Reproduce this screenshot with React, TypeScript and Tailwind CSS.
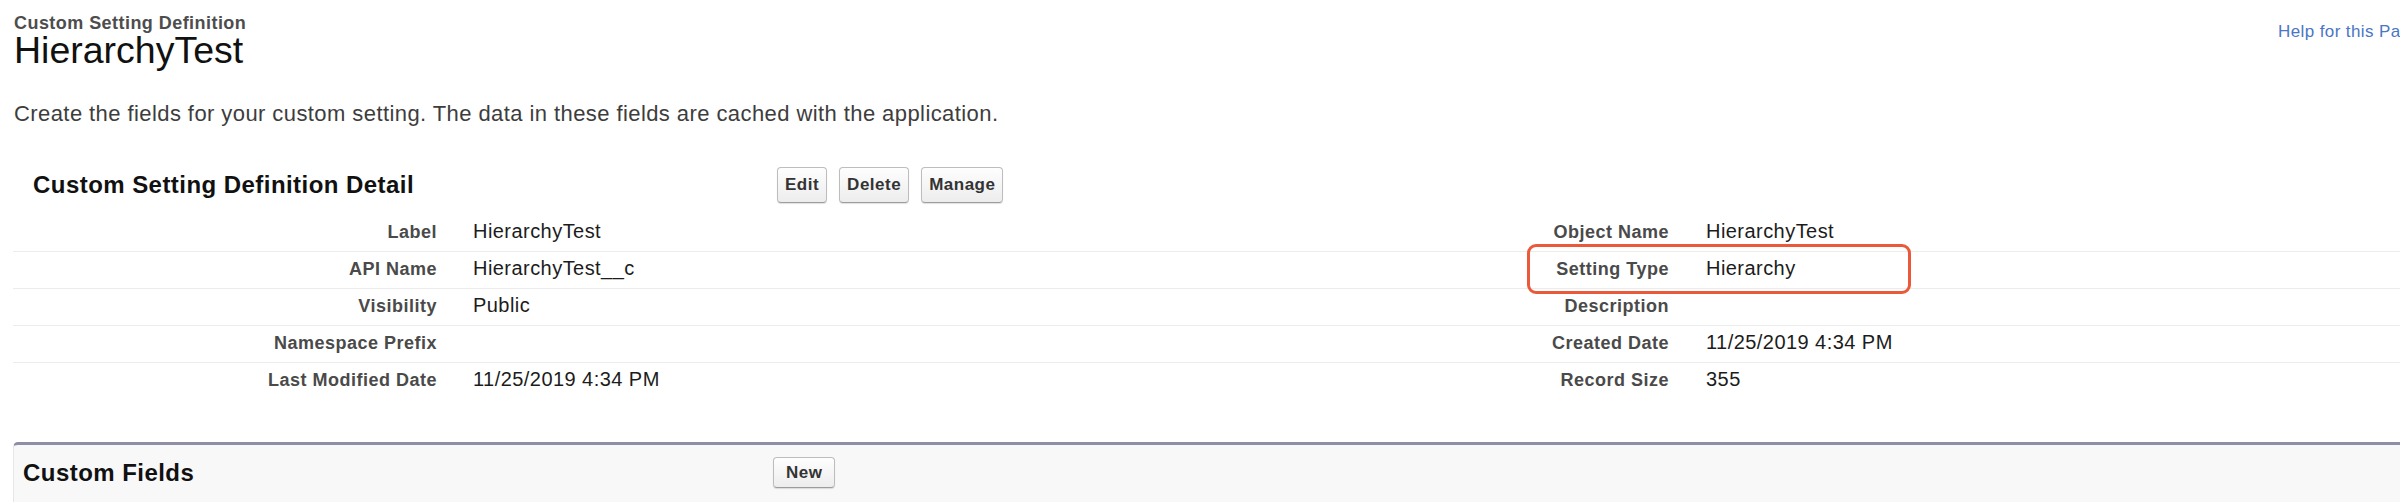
const rows = [
  ["Label", "HierarchyTest", "Object Name", "HierarchyTest"],
  ["API Name", "HierarchyTest__c", "Setting Type", "Hierarchy"],
  ["Visibility", "Public", "Description", ""],
  ["Namespace Prefix", "", "Created Date", "11/25/2019 4:34 PM"],
  ["Last Modified Date", "11/25/2019 4:34 PM", "Record Size", "355"],
];

function Btn({ label, wide }: { label: string; wide?: boolean }) {
  return (
    <button
      className={
        wide
          ? "h-[31px] px-[12px] rounded-[4px] border border-[#bdbdbd] border-b-[#9c9c9c] bg-linear-to-b from-[#fefefe] to-[#ededed] text-[17px] font-bold tracking-[0.5px] leading-none text-[#333] shadow-[0_1px_1px_rgba(0,0,0,0.12)]"
          : "h-[36px] px-[7px] rounded-[4px] border border-[#bdbdbd] border-b-[#9c9c9c] bg-linear-to-b from-[#fefefe] to-[#ededed] text-[17px] font-bold tracking-[0.5px] leading-none text-[#333] shadow-[0_1px_1px_rgba(0,0,0,0.12)]"
      }
    >
      {label}
    </button>
  );
}

function App() {
  return (
    <div className="w-[2400px] h-[502px] overflow-hidden bg-white font-['Liberation_Sans',Arial,sans-serif]">
      <div className="w-[2440px]">
        <div className="flex">
          <div className="flex-1 pl-[14px] pt-[14px]">
            <div className="text-[18px] font-bold tracking-[0.45px] leading-none text-[#4d4d4d]">
              Custom Setting Definition
            </div>
            <h1 className="text-[37.5px] leading-none text-[#111]">HierarchyTest</h1>
          </div>
          <div className="w-[162px] pt-[20px]">
            <a className="text-[17px] tracking-[0.4px] leading-none text-[#4a76c4] whitespace-nowrap">
              Help for this Page
            </a>
          </div>
        </div>

        <p className="mt-[33px] pl-[14px] text-[22px] tracking-[0.42px] leading-none text-[#3d3d3d]">
          Create the fields for your custom setting. The data in these fields are cached with the application.
        </p>

        <section className="mt-[40px] pl-[13px]">
          <div className="flex h-[40px] items-center">
            <h2 className="w-[764px] pl-[20px] text-[24px] font-bold tracking-[0.45px] leading-none text-[#111]">
              Custom Setting Definition Detail
            </h2>
            <div className="flex gap-[12px]">
              <Btn label="Edit" />
              <Btn label="Delete" />
              <Btn label="Manage" />
            </div>
          </div>

          <div className="relative mt-[10px]">
            {rows.map((r, i) => (
              <div
                key={r[0]}
                className={
                  i < rows.length - 1
                    ? "flex h-[37px] items-baseline pt-[6px] border-b border-[#ececec]"
                    : "flex h-[36px] items-baseline pt-[6px]"
                }
              >
                <div className="w-[424px] text-right text-[18px] font-bold tracking-[0.5px] leading-none text-[#4a4a4a]">
                  {r[0]}
                </div>
                <div className="w-[863px] pl-[36px] text-[20px] tracking-[0.45px] leading-none text-[#1c1c1c]">
                  {r[1] || "\u00a0"}
                </div>
                <div className="w-[369px] text-right text-[18px] font-bold tracking-[0.5px] leading-none text-[#4a4a4a]">
                  {r[2]}
                </div>
                <div className="flex-1 pl-[37px] text-[20px] tracking-[0.45px] leading-none text-[#1c1c1c]">
                  {r[3] || "\u00a0"}
                </div>
              </div>
            ))}
            <div className="absolute left-[1514px] top-[29px] w-[384px] h-[50px] rounded-[9px] border-[3px] border-[#ea5a3a]" />
          </div>
        </section>

        <section className="mt-[43px] ml-[13px] h-[70px] rounded-tl-[5px] border-t-[3px] border-l border-t-[#8e8fa6] border-l-[#e6e6e6] bg-[#f8f8f8]">
          <div className="flex h-[56px] items-center">
            <h2 className="w-[759px] pl-[9px] text-[24px] font-bold tracking-[0.45px] leading-none text-[#111]">
              Custom Fields
            </h2>
            <Btn label="New" wide />
          </div>
        </section>
      </div>
    </div>
  );
}

export default App;
